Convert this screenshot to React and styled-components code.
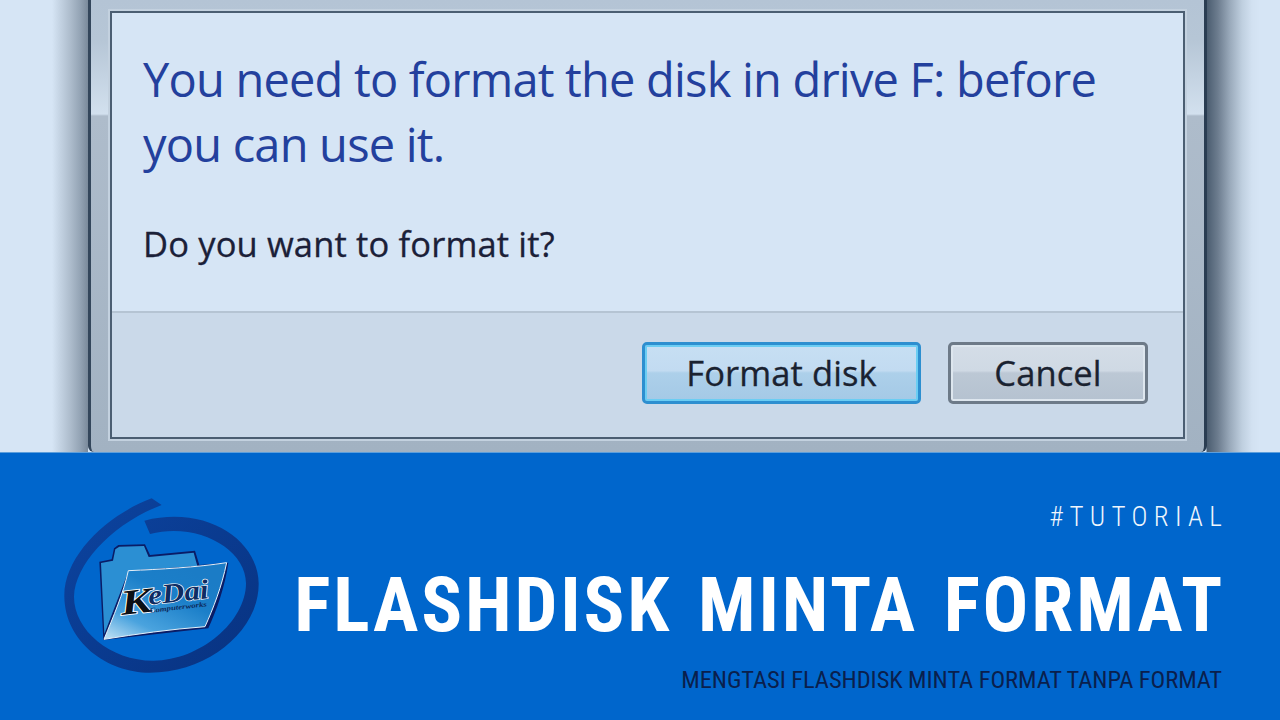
import React from "react";
import styled, { createGlobalStyle } from "styled-components";

const Global = createGlobalStyle`
  html, body { margin: 0; padding: 0; width: 1280px; height: 720px; overflow: hidden; background: #0066cc; }
  * { box-sizing: border-box; }
`;
const Page = styled.div`
  width: 1280px; height: 720px; display: flex; flex-direction: column; overflow: hidden;
`;
const Desktop = styled.section`
  height: 452px; display: flex; padding: 0 73px 0 88px; flex: none;
  background: linear-gradient(90deg, #d6e5f5 0, #d6e5f5 52px, #c4d3e3 60px, #aebdcd 70px, #94a4b5 80px, #7a8a9b 88px, #d6e5f5 88px, #d6e5f5 1206px, #4b5d70 1207px, #6d7d8f 1218px, #9aaabb 1230px, #bfcfdf 1242px, #d2e1f1 1252px, #d6e5f5 1260px);
`;
const Frame = styled.div`
  flex: 1; display: flex; padding: 11px 19px 13px 19px;
  border-left: 3px solid #33465b; border-right: 3px solid #2a3d52; border-radius: 0 0 6px 6px;
  background: linear-gradient(180deg, #b4c4d5 0, #b6c6d6 40px, #d2e0ee 114px, #aebccb 116px, #a2b2c2 100%);
`;
const Pane = styled.div`
  flex: 1; display: flex; flex-direction: column;
  border: 2px solid #4b5e72; background: #d6e5f5; box-shadow: 0 0 0 2px #c3d1df;
`;
const Content = styled.div`
  height: 298px; padding: 34px 0 0 31px; flex: none; display: flex; flex-direction: column;
`;
const Heading = styled.h1`
  margin: 0; width: 1010px; font: 400 47px/65px "Open Sans", sans-serif; color: #23409d; letter-spacing: -0.8px;
`;
const Question = styled.p`
  margin: 43px 0 0; font: 400 34.5px/48px "Open Sans", sans-serif; color: #1b2038; letter-spacing: 0.15px;
  -webkit-text-stroke: 0.3px #1b2038;
`;
const Footer = styled.div`
  flex: 1; display: flex; justify-content: flex-end; align-items: flex-start; gap: 27px;
  padding: 29px 35px 0 0; background: #cad9e9; border-top: 2px solid #b5c4d3;
`;
const DialogButton = styled.div`
  height: 62px; width: ${p => p.$w}px; display: flex; align-items: center; justify-content: center;
  border-radius: 5px; font: 400 34.5px/1 "Open Sans", sans-serif; color: #1a2230; letter-spacing: 0.1px;
  -webkit-text-stroke: 0.3px #1a2230;
  border: 3px solid ${p => p.$primary ? "#2d8fd0" : "#6d7a88"};
  box-shadow: inset 0 0 0 2px ${p => p.$primary ? "#6bcdf3" : "#dde6ee"};
  background: ${p => p.$primary
    ? "linear-gradient(180deg, #c7dff3 0, #c2dbf1 46%, #add0ea 50%, #a4c9e6 100%)"
    : "linear-gradient(180deg, #d4dde7 0, #cfd9e4 46%, #bcc8d5 50%, #b5c2d0 100%)"};
`;
const Banner = styled.section`
  flex: 1; background: #0066cc; display: flex; align-items: flex-start; border-top: 1px solid #5d9fdc;
  padding: 27px 58px 0 40px; gap: 0;
`;
const LogoBox = styled.div`
  width: 240px; height: 210px; flex: none;
`;
const Copy = styled.div`
  flex: 1; min-width: 0; display: flex; flex-direction: column; align-items: flex-end; padding-top: 21px;
`;
const Tag = styled.div`
  font: 300 27px/32px "Roboto", sans-serif; font-stretch: 75%; letter-spacing: 6.3px; color: #f0f6fc; margin-right: -6px;
`;
const Title = styled.h2`
  margin: 28px 0 0; font: 700 76px/88px "Roboto", sans-serif; font-stretch: 78%; letter-spacing: 2.8px; word-spacing: 5.5px; color: #fff; margin-right: -3px; white-space: nowrap;
`;
const Sub = styled.div`
  margin-top: 16px; font: 400 24.5px/30px "Roboto", sans-serif; font-stretch: 75%; letter-spacing: -0.07px; color: #0a1f4d; white-space: nowrap;
`;
const LogoWord = styled.text`
  font-family: "Liberation Serif", serif; font-weight: 700; font-style: italic; paint-order: stroke;
`;

function Logo() {
  return (
    <svg width="240" height="210" viewBox="0 0 720 630" aria-label="KeDai Computerworks logo">
      <defs>
        <linearGradient id="fd" x1="0" y1="1" x2="0.7" y2="0.1">
          <stop offset="0" stopColor="#c6e4f6" />
          <stop offset="0.3" stopColor="#4aa3de" />
          <stop offset="0.7" stopColor="#1b7fc9" />
          <stop offset="1" stopColor="#1b7cc6" />
        </linearGradient>
        <linearGradient id="ring" x1="0" y1="0" x2="1" y2="1">
          <stop offset="0" stopColor="#0c44a0" />
          <stop offset="1" stopColor="#083280" />
        </linearGradient>
      </defs>
      <path d="M335 55 C200 105 70 230 73 350 C75 485 200 578 330 578 C505 578 658 450 656 310 C654 180 500 75 313 122 L330 162 C470 125 618 205 618 310 C618 425 480 542 340 542 C210 542 102 450 102 350 C105 250 220 130 365 75 Z" fill="url(#ring)" />
      <path d="M178 245 L215 238 L222 205 L235 195 L315 193 L330 225 L465 212 L478 255 L565 248 C555 320 530 390 505 445 L190 480 Z" fill="#0a1c66" />
      <path d="M183 249 L219 242 L226 208 L238 200 L312 198 L326 231 L461 218 L472 258 L266 272 L193 462 Z" fill="#2b8fd3" />
      <path d="M265 272 C360 268 470 262 560 248 C545 320 520 385 495 440 C390 448 290 462 192 478 C220 410 250 340 265 272 Z" fill="url(#fd)" stroke="#e4f1fb" strokeWidth="3" />
      <g transform="rotate(-6.5 245 405)">
        <LogoWord x="245" y="405" fontSize="106" textLength="95" lengthAdjust="spacingAndGlyphs" fill="#0c0f14" stroke="#fff" strokeWidth="5">K</LogoWord>
        <LogoWord x="330" y="384" fontSize="82" textLength="182" lengthAdjust="spacingAndGlyphs" fill="#0e2c62" stroke="#fff" strokeWidth="4">eDai</LogoWord>
        <LogoWord x="330" y="408" fontSize="21" textLength="172" lengthAdjust="spacingAndGlyphs" fill="#0d2a5c">Computerworks</LogoWord>
      </g>
    </svg>
  );
}

export default function App() {
  return (
    <Page>
      <Global />
      <Desktop>
        <Frame>
          <Pane>
            <Content>
              <Heading>You need to format the disk in drive F: before you can use it.</Heading>
              <Question>Do you want to format it?</Question>
            </Content>
            <Footer>
              <DialogButton $primary $w={279}>Format disk</DialogButton>
              <DialogButton $w={200}>Cancel</DialogButton>
            </Footer>
          </Pane>
        </Frame>
      </Desktop>
      <Banner>
        <LogoBox><Logo /></LogoBox>
        <Copy>
          <Tag>#TUTORIAL</Tag>
          <Title>FLASHDISK MINTA FORMAT</Title>
          <Sub>MENGTASI FLASHDISK MINTA FORMAT TANPA FORMAT</Sub>
        </Copy>
      </Banner>
    </Page>
  );
}
